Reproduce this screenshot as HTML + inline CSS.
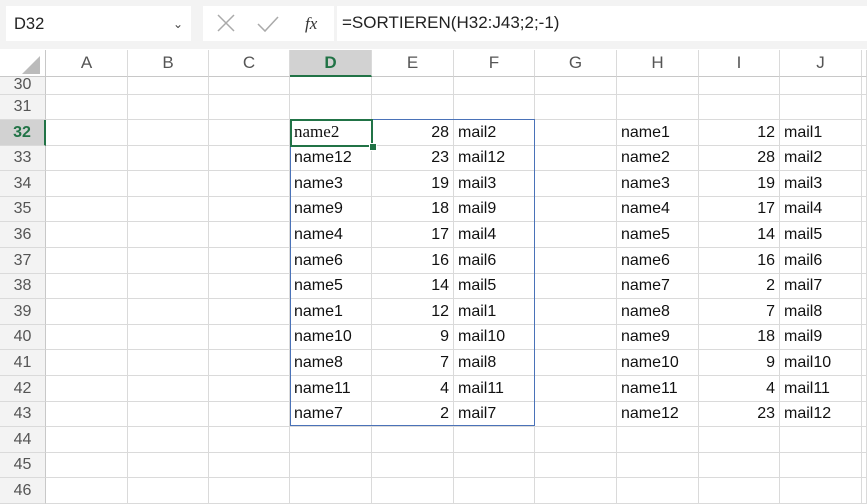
<!DOCTYPE html><html><head><style>
body{margin:0;width:867px;height:504px;overflow:hidden;background:#fff;font-family:"Liberation Sans",sans-serif;position:relative}
.tb{position:absolute;left:0;top:0;width:867px;height:49px;background:#f3f3f3}
.nb{position:absolute;left:6px;top:6px;width:185px;height:35px;background:#fff;font-size:16.5px;line-height:37px;box-sizing:border-box;padding-left:8px;color:#222}
.fxb{position:absolute;left:203px;top:6px;width:131px;height:35px;background:#fff}
.fb{position:absolute;left:337px;top:6px;width:530px;height:35px;background:#fff;font-size:17px;line-height:33px;padding-left:5px;color:#222}
.row{position:absolute;left:0;width:867px;display:flex;font-size:16px;color:#111}
.row>div{box-sizing:border-box;border-right:1px solid #dadada;border-bottom:1px solid #dadada;height:100%;overflow:hidden;white-space:nowrap;padding:0 4px 3px;display:flex;align-items:flex-end}
.row>div:nth-child(1){width:46px;background:#f3f3f3;color:#555;justify-content:center;border-right:1px solid #c8c8c8;padding:0 0 3px}
.row>div:nth-child(2),.row>div:nth-child(5),.row>div:nth-child(6),.row>div:nth-child(8),.row>div:nth-child(9),.row>div:nth-child(11){width:82px}
.row>div:nth-child(3),.row>div:nth-child(4),.row>div:nth-child(7),.row>div:nth-child(10){width:81px}
.row>div:nth-child(12){width:5px;padding:0}
.r{justify-content:flex-end}
.hd>div{justify-content:center;align-items:center!important;padding:0!important;color:#555;background:#fff;border-bottom:1px solid #c8c8c8}
</style></head><body>
<div class="tb"></div>
<div class="nb">D32<span style="position:absolute;right:8px;top:0;font-size:12px;color:#444">&#8964;</span></div>
<div class="fxb"><svg width="131" height="35"><path d="M15 9l16 16M31 9L15 25" stroke="#aaa" stroke-width="1.5"/><path d="M55 18l7 7 13-14" stroke="#aaa" stroke-width="1.5" fill="none"/><text x="102" y="23" font-family="Liberation Serif" font-style="italic" font-size="17" fill="#333">fx</text></svg></div>
<div class="fb">=SORTIEREN(H32:J43;2;-1)</div>
<div class="row hd" style="top:50px;height:27px;font-size:17px"><div style="background:#fff"><svg width="46" height="27"><polygon points="40,6 40,24 22,24" fill="#bbb"/></svg></div><div>A</div><div>B</div><div>C</div><div style="background:#d2d2d2;color:#217346;font-weight:bold;border-bottom:2px solid #217346">D</div><div>E</div><div>F</div><div>G</div><div>H</div><div>I</div><div>J</div><div></div></div>
<div class="row" style="top:77px;height:18px"><div style="padding-bottom:0">30</div><div></div><div></div><div></div><div></div><div></div><div></div><div></div><div></div><div></div><div></div><div></div></div>
<div class="row" style="top:95px;height:25px"><div>31</div><div></div><div></div><div></div><div></div><div></div><div></div><div></div><div></div><div></div><div></div><div></div></div>
<div class="row" style="top:120px;height:25.6px"><div style="background:#d2d2d2;color:#217346;font-weight:bold;border-right:2px solid #217346">32</div><div></div><div></div><div></div><div style="font-family:'Liberation Serif',serif;font-size:17px">name2</div><div class="r">28</div><div>mail2</div><div></div><div>name1</div><div class="r">12</div><div>mail1</div><div></div></div>
<div class="row" style="top:145.6px;height:25.6px"><div>33</div><div></div><div></div><div></div><div>name12</div><div class="r">23</div><div>mail12</div><div></div><div>name2</div><div class="r">28</div><div>mail2</div><div></div></div>
<div class="row" style="top:171.2px;height:25.6px"><div>34</div><div></div><div></div><div></div><div>name3</div><div class="r">19</div><div>mail3</div><div></div><div>name3</div><div class="r">19</div><div>mail3</div><div></div></div>
<div class="row" style="top:196.8px;height:25.6px"><div>35</div><div></div><div></div><div></div><div>name9</div><div class="r">18</div><div>mail9</div><div></div><div>name4</div><div class="r">17</div><div>mail4</div><div></div></div>
<div class="row" style="top:222.4px;height:25.6px"><div>36</div><div></div><div></div><div></div><div>name4</div><div class="r">17</div><div>mail4</div><div></div><div>name5</div><div class="r">14</div><div>mail5</div><div></div></div>
<div class="row" style="top:248px;height:25.6px"><div>37</div><div></div><div></div><div></div><div>name6</div><div class="r">16</div><div>mail6</div><div></div><div>name6</div><div class="r">16</div><div>mail6</div><div></div></div>
<div class="row" style="top:273.6px;height:25.6px"><div>38</div><div></div><div></div><div></div><div>name5</div><div class="r">14</div><div>mail5</div><div></div><div>name7</div><div class="r">2</div><div>mail7</div><div></div></div>
<div class="row" style="top:299.2px;height:25.6px"><div>39</div><div></div><div></div><div></div><div>name1</div><div class="r">12</div><div>mail1</div><div></div><div>name8</div><div class="r">7</div><div>mail8</div><div></div></div>
<div class="row" style="top:324.8px;height:25.6px"><div>40</div><div></div><div></div><div></div><div>name10</div><div class="r">9</div><div>mail10</div><div></div><div>name9</div><div class="r">18</div><div>mail9</div><div></div></div>
<div class="row" style="top:350.4px;height:25.6px"><div>41</div><div></div><div></div><div></div><div>name8</div><div class="r">7</div><div>mail8</div><div></div><div>name10</div><div class="r">9</div><div>mail10</div><div></div></div>
<div class="row" style="top:376px;height:25.6px"><div>42</div><div></div><div></div><div></div><div>name11</div><div class="r">4</div><div>mail11</div><div></div><div>name11</div><div class="r">4</div><div>mail11</div><div></div></div>
<div class="row" style="top:401.6px;height:25.6px"><div>43</div><div></div><div></div><div></div><div>name7</div><div class="r">2</div><div>mail7</div><div></div><div>name12</div><div class="r">23</div><div>mail12</div><div></div></div>
<div class="row" style="top:427.2px;height:25.6px"><div>44</div><div></div><div></div><div></div><div></div><div></div><div></div><div></div><div></div><div></div><div></div><div></div></div>
<div class="row" style="top:452.8px;height:25.6px"><div>45</div><div></div><div></div><div></div><div></div><div></div><div></div><div></div><div></div><div></div><div></div><div></div></div>
<div class="row" style="top:478.4px;height:25.6px"><div>46</div><div></div><div></div><div></div><div></div><div></div><div></div><div></div><div></div><div></div><div></div><div></div></div>
<div style="position:absolute;left:290px;top:119px;width:245px;height:307px;border:1px solid #4a72b8;box-sizing:border-box"></div>
<div style="position:absolute;left:290px;top:119px;width:83px;height:28px;border:2px solid #217346;box-sizing:border-box"></div>
<div style="position:absolute;left:369px;top:143px;width:6px;height:6px;background:#217346;border:1px solid #fff"></div>
</body></html>
